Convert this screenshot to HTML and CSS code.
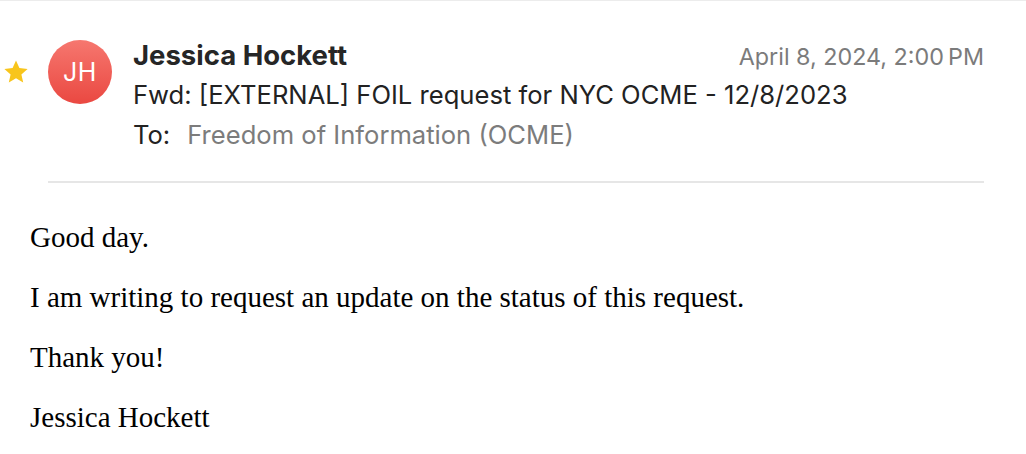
FILE: index.html
```html
<!DOCTYPE html>
<html>
<head>
<meta charset="utf-8">
<link rel="stylesheet" href="styles.css">
</head>
<body>
<div class="topline"></div>
<div class="header">
  <div class="star">
    <svg width="24" height="24" viewBox="0 0 24 24"><path d="M12 0.6l3.4 7.5 8.2.8-6.2 5.5 1.8 8.1L12 18.3l-7.2 4.2 1.8-8.1L0.4 8.9l8.2-.8z" fill="#f8c51c"/></svg>
  </div>
  <div class="avatar">JH</div>
  <div class="info">
    <div class="row-top">
      <div class="name">Jessica Hockett</div>
      <div class="date">April 8, 2024, 2:00&#8239;PM</div>
    </div>
    <div class="subject">Fwd: [EXTERNAL] FOIL request for NYC OCME - 12/8/2023</div>
    <div class="to"><span class="to-label">To:</span><span class="to-value">Freedom of Information (OCME)</span></div>
  </div>
</div>
<div class="divider"></div>
<div class="body">
  <p>Good day.</p>
  <p>I am writing to request an update on the status of this request.</p>
  <p>Thank you!</p>
  <p>Jessica Hockett</p>
</div>
</body>
</html>
```
FILE: styles.css
```css
html, body {
  margin: 0;
  padding: 0;
  background: #ffffff;
}
.topline {
  height: 1px;
  background: #ececec;
}
.header {
  display: flex;
  align-items: flex-start;
  padding: 34px 42px 0 4px;
  font-family: Inter, "Liberation Sans", sans-serif;
}
.star {
  width: 24px;
  height: 24px;
  margin-top: 25px;
  display: flex;
}
.avatar {
  width: 64px;
  height: 64px;
  margin-top: 5px;
  margin-left: 20px;
  border-radius: 50%;
  background: linear-gradient(180deg, #f6776f 0%, #ea4841 100%);
  color: #ffffff;
  font-size: 25px;
  display: flex;
  align-items: center;
  justify-content: center;
  letter-spacing: 0.5px;
}
.info {
  flex: 1;
  margin-left: 21px;
  display: flex;
  flex-direction: column;
}
.row-top {
  display: flex;
  justify-content: space-between;
  align-items: baseline;
  height: 40px;
}
.name {
  font-size: 27.5px;
  font-weight: 700;
  color: #262626;
  line-height: 40px;
}
.date {
  font-size: 23.3px;
  color: #7b7b7b;
  line-height: 40px;
}
.subject {
  font-size: 25.6px;
  color: #222222;
  line-height: 40px;
}
.to {
  font-size: 25.6px;
  line-height: 40px;
}
.to-label {
  color: #222222;
  margin-right: 17px;
}
.to-value {
  color: #7c7c7c;
}
.divider {
  height: 2px;
  background: #e6e6e6;
  margin: 26px 42px 0 48px;
}
.body {
  padding: 24px 0 0 30px;
  font-family: "Liberation Serif", serif;
  font-size: 29px;
  color: #000000;
}
.body p {
  margin: 0;
  line-height: 60px;
}
```
